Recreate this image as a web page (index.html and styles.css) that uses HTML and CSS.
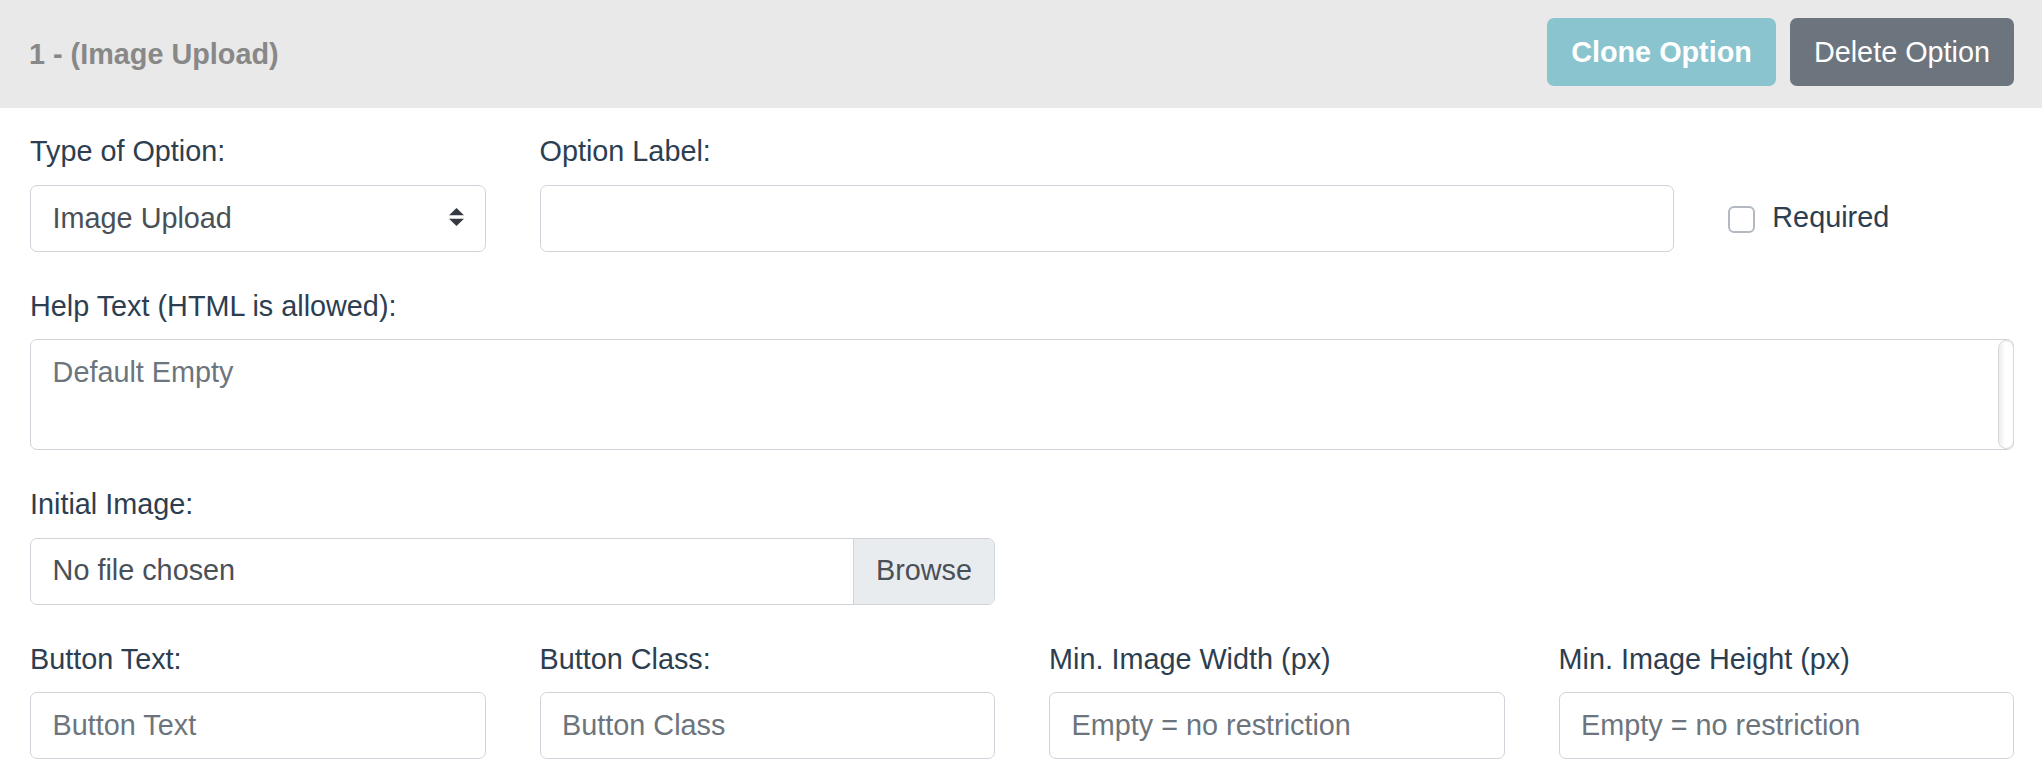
FILE: index.html
```html
<!DOCTYPE html>
<html>
<head>
<title>Option 1 - Image Upload</title>

<link rel="stylesheet" href="styles.css">
</head>

<body>

<!-- Option card -->
<div class="option-card">

    <!-- header with title and actions -->
    <div class="option-header">
        <span class="option-title">1 - (Image Upload)</span>
        <div class="header-buttons">
            <button class="btn btn-clone">Clone Option</button>
            <button class="btn btn-delete">Delete Option</button>
        </div>
    </div>

    <div class="option-body">

        <!-- type / label / required -->
        <div class="form-row">
            <div class="form-group span-3">
                <label>Type of Option:</label>
                <div class="select-wrap">
                    <select class="form-control custom-select">
                        <option>Image Upload</option>
                    </select>
                    <svg class="select-arrow" viewBox="0 0 4 5" width="15" height="18" preserveAspectRatio="none">
                        <path d="M2 0L0 2h4zm0 5L0 3h4z" fill="#343a40"/>
                    </svg>
                </div>
            </div>

            <div class="form-group span-7">
                <label>Option Label:</label>
                <input class="form-control" type="text">
            </div>

            <div class="form-group span-2 check-group">
                <input type="checkbox" class="check-box" id="required">
                <label class="check-label" for="required">Required</label>
            </div>
        </div>

        <!-- help text -->
        <div class="form-row">
            <div class="form-group span-12">
                <label>Help Text (HTML is allowed):</label>
                <div class="textarea-wrap">
                    <textarea class="form-control" placeholder="Default Empty"></textarea>
                    <span class="scroll-track"></span>
                </div>
            </div>
        </div>

        <!-- initial image -->
        <div class="form-row">
            <div class="form-group span-6">
                <label>Initial Image:</label>
                <div class="file-input">
                    <span class="file-name">No file chosen</span>
                    <span class="file-browse">Browse</span>
                </div>
            </div>
        </div>

        <!-- button / size settings -->
        <div class="form-row last-row">
            <div class="form-group span-3">
                <label>Button Text:</label>
                <input class="form-control" type="text" placeholder="Button Text">
            </div>
            <div class="form-group span-3">
                <label>Button Class:</label>
                <input class="form-control" type="text" placeholder="Button Class">
            </div>
            <div class="form-group span-3">
                <label>Min. Image Width (px)</label>
                <input class="form-control" type="text" placeholder="Empty = no restriction">
            </div>
            <div class="form-group span-3">
                <label>Min. Image Height (px)</label>
                <input class="form-control" type="text" placeholder="Empty = no restriction">
            </div>
        </div>

    </div>
</div>

</body>
</html>
```

FILE: styles.css
```css
html {
    overflow: hidden;
}

body {
    margin: 0;
    background-color: #ffffff;
    font-family: "Liberation Sans", Arial, Helvetica, sans-serif;
    font-size: 28.8px;
    line-height: 1.5;
    color: #2c3e50;
}

/* header */

.option-header {
    display: flex;
    justify-content: space-between;
    align-items: center;
    height: 108px;
    padding: 0 28px 0 29px;
    background-color: #e9e9e9;
    box-sizing: border-box;
}

.option-title {
    font-weight: bold;
    color: #888888;
    margin-top: 2px;
}

.header-buttons {
    display: flex;
    gap: 14px;
    margin-top: -4px;
}

.btn {
    font-family: inherit;
    font-size: 28.8px;
    height: 68px;
    padding: 0 24px;
    border: 0;
    border-radius: 7px;
    color: #ffffff;
}

.btn-clone {
    background-color: #8ac4cf;
    font-weight: bold;
}

.btn-delete {
    background-color: #6c757d;
}

/* body + grid */

.option-body {
    padding: 22px 28px 0 30px;
}

.form-row {
    display: grid;
    grid-template-columns: repeat(12, 1fr);
    column-gap: 54px;
}

.span-2 { grid-column: span 2; }
.span-3 { grid-column: span 3; }
.span-6 { grid-column: span 6; }
.span-7 { grid-column: span 7; }
.span-12 { grid-column: span 12; }

.form-group {
    margin-bottom: 33px;
}

.last-row .form-group {
    margin-bottom: 0;
}

.form-group > label {
    display: block;
    line-height: 43.5px;
    margin-bottom: 11px;
}

/* controls */

.form-control {
    display: block;
    width: 100%;
    height: 67px;
    box-sizing: border-box;
    padding: 0 21.6px;
    font-family: inherit;
    font-size: 28.8px;
    color: #495057;
    background-color: #ffffff;
    border: 1px solid #ced4da;
    border-radius: 7px;
    outline: none;
}

.form-control::placeholder {
    color: #6c757d;
    opacity: 1;
}

.select-wrap {
    position: relative;
}

.custom-select {
    appearance: none;
    -webkit-appearance: none;
}

.select-arrow {
    position: absolute;
    right: 22px;
    top: 50%;
    margin-top: -10px;
}

.check-group {
    align-self: end;
    display: flex;
    align-items: center;
    height: 67px;
}

.form-group > .check-label {
    display: inline;
    margin: 0;
}

.check-box {
    appearance: none;
    -webkit-appearance: none;
    width: 27px;
    height: 27px;
    margin: 2px 17px 0 0;
    border: 2px solid #b3b9c0;
    border-radius: 6px;
    background-color: #ffffff;
    box-sizing: border-box;
}

.textarea-wrap {
    position: relative;
}

textarea.form-control {
    height: 111px;
    padding: 10.8px 21.6px;
    line-height: 1.5;
    resize: none;
}

.scroll-track {
    position: absolute;
    top: 1px;
    bottom: 1px;
    right: 0;
    width: 16px;
    box-sizing: border-box;
    border: 1px solid #d8d9db;
    border-radius: 8px;
    background: linear-gradient(to right, #ececec, #ffffff 45%);
}

.file-input {
    display: flex;
    height: 67px;
    box-sizing: border-box;
    border: 1px solid #ced4da;
    border-radius: 7px;
    overflow: hidden;
    color: #495057;
}

.file-name {
    flex: 1;
    display: flex;
    align-items: center;
    padding: 0 21.6px;
}

.file-browse {
    display: flex;
    align-items: center;
    padding: 0 22px;
    background-color: #e9ecef;
    border-left: 1px solid #ced4da;
}
```
